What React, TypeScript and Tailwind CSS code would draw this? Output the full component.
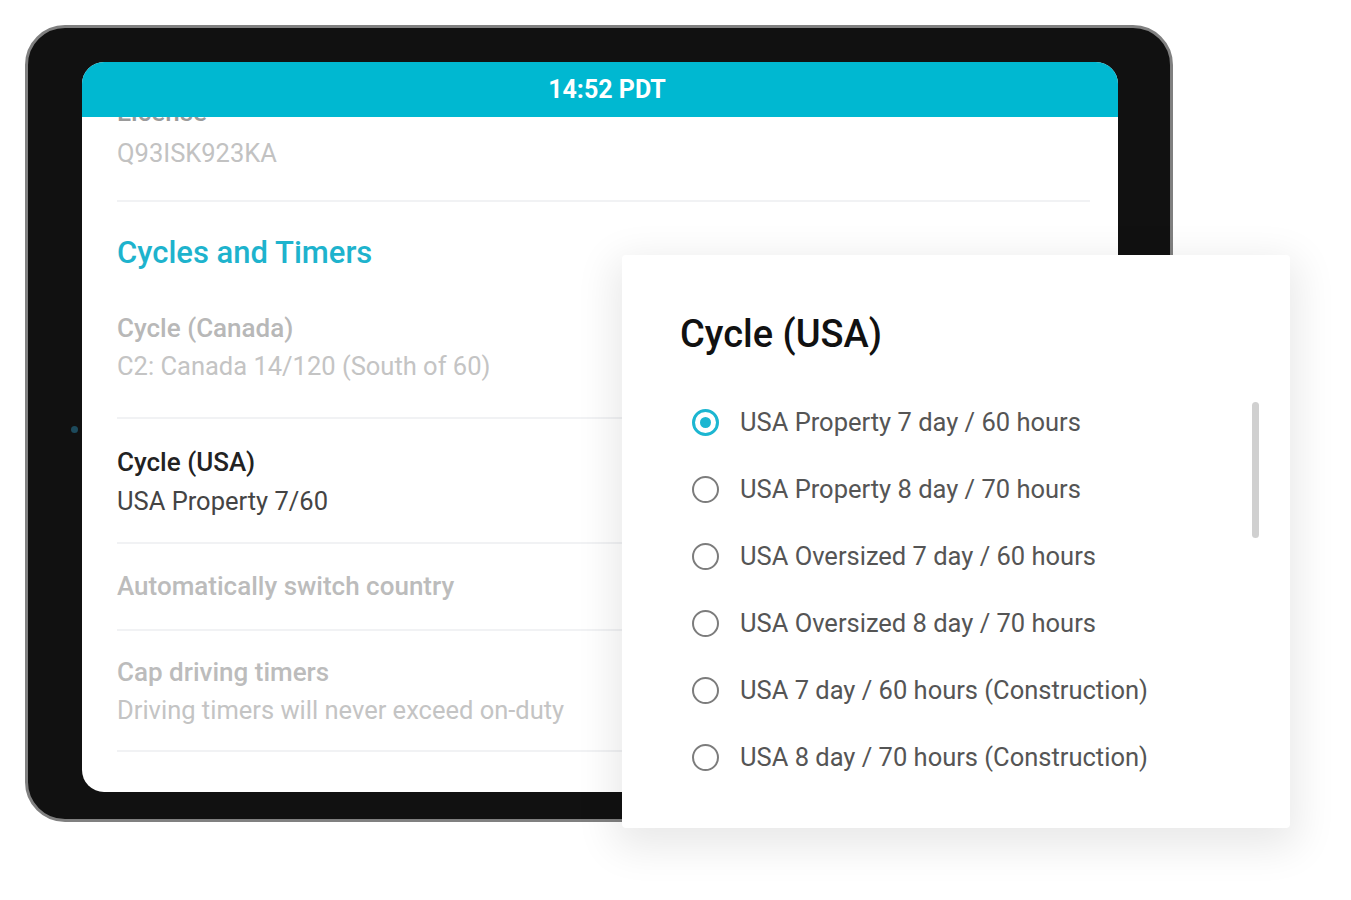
import React from 'react';

const options = [
  'USA Property 7 day / 60 hours',
  'USA Property 8 day / 70 hours',
  'USA Oversized 7 day / 60 hours',
  'USA Oversized 8 day / 70 hours',
  'USA 7 day / 60 hours (Construction)',
  'USA 8 day / 70 hours (Construction)',
];

const Divider = () => <div className="h-[2px] bg-[#f1f2f4]" />;

const Radio = ({ checked }: { checked: boolean }) =>
  checked ? (
    <div className="w-[27px] h-[27px] shrink-0 rounded-full border-[3px] border-[#1cb6d1] flex items-center justify-center">
      <div className="w-[11px] h-[11px] rounded-full bg-[#1cb6d1]" />
    </div>
  ) : (
    <div className="w-[27px] h-[27px] shrink-0 rounded-full border-[2.5px] border-[#7c7c7c]" />
  );

export default function App() {
  return (
    <div
      className="relative w-[1351px] h-[900px] bg-white overflow-hidden"
      style={{ fontFamily: 'Roboto, "Noto Sans", sans-serif' }}
    >
      {/* Tablet */}
      <div className="relative ml-[25px] mt-[25px] w-[1148px] h-[797px] rounded-[40px] bg-[#111111] border-[3px] border-[#808080] pl-[54px] pt-[34px] pr-[52px] pb-[27px]">
        {/* camera */}
        <div className="absolute left-[43px] top-[398px] w-[7px] h-[7px] rounded-full bg-[#1d4a5c]" />

        <div className="w-full h-full rounded-[22px] overflow-hidden bg-white flex flex-col">
          <div className="h-[55px] shrink-0 bg-[#00b8d1] flex items-center justify-center pl-[14px] text-white text-[25px] font-bold relative z-10">
            14:52 PDT
          </div>

          <div className="pl-[35px] pr-[28px] flex flex-col">
            <div className="-mt-[20px] h-[30px] leading-[30px] text-[26px] font-medium text-[#9a9a9a]">License</div>
            <div className="mt-[11px] h-[30px] leading-[30px] text-[25.5px] text-[#c2c2c2]">Q93ISK923KA</div>
            <div className="mt-[32px]">
              <Divider />
            </div>

            <div className="mt-[32px] h-[38px] leading-[38px] text-[31px] font-medium text-[#1eb3cd]">
              Cycles and Timers
            </div>

            <div className="mt-[41px] h-[30px] leading-[30px] text-[26px] font-medium text-[#b8b8b8]">Cycle (Canada)</div>
            <div className="mt-[8px] h-[30px] leading-[30px] text-[25.5px] text-[#c4c4c4]">C2: Canada 14/120 (South of 60)</div>
            <div className="mt-[36px]">
              <Divider />
            </div>

            <div className="mt-[28px] h-[30px] leading-[30px] text-[26px] font-medium text-[#222222]">Cycle (USA)</div>
            <div className="mt-[9px] h-[30px] leading-[30px] text-[25.5px] text-[#444444]">USA Property 7/60</div>
            <div className="mt-[26px]">
              <Divider />
            </div>

            <div className="mt-[27px] h-[30px] leading-[30px] text-[26px] font-medium text-[#bcbcbc]">
              Automatically switch country
            </div>
            <div className="mt-[28px]">
              <Divider />
            </div>

            <div className="mt-[26px] h-[30px] leading-[30px] text-[26px] font-medium text-[#bcbcbc]">Cap driving timers</div>
            <div className="mt-[8px] h-[30px] leading-[30px] text-[25.5px] text-[#c4c4c4]">
              Driving timers will never exceed on-duty
            </div>
            <div className="mt-[25px]">
              <Divider />
            </div>
          </div>
        </div>
      </div>

      {/* Dialog */}
      <div className="absolute left-[622px] top-[255px] w-[668px] h-[573px] bg-white rounded-[4px] shadow-[0_12px_40px_8px_rgba(0,0,0,0.09)] pl-[70px] pt-[58px]">
        <div className="-ml-[12px] mt-[1px] h-[40px] leading-[40px] text-[38px] font-medium text-[#111111]">Cycle (USA)</div>

        <div className="mt-[35px] flex flex-col">
          {options.map((o, i) => (
            <div key={o} className="h-[67px] flex items-center gap-[21px]">
              <Radio checked={i === 0} />
              <span className="text-[25.5px] text-[#555555] whitespace-nowrap">{o}</span>
            </div>
          ))}
        </div>

        <div className="absolute left-[630px] top-[147px] w-[7px] h-[136px] rounded-full bg-[#d0d0d0]" />
      </div>
    </div>
  );
}
